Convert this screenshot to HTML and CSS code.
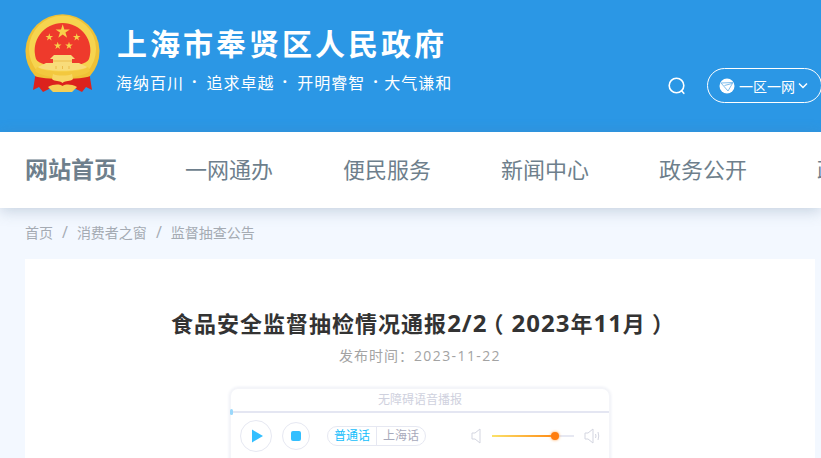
FILE: index.html
```html
<!DOCTYPE html>
<html lang="zh-CN">
<head>
    <meta charset="UTF-8">
    <meta name="viewport" content="width=device-width, initial-scale=1.0">
    <title>食品安全监督抽检情况通报</title>
    <link rel="stylesheet" href="styles.css">
</head>
<body>
    <header class="top">
        <svg class="emblem" viewBox="0 0 76 80">
            <defs>
                <polygon id="star" points="0,-10 2.240,-3.090 9.510,-3.090 3.630,1.180 5.880,8.090 0,3.820 -5.880,8.090 -3.630,1.180 -9.510,-3.090 -2.240,-3.090" fill="#f8d04a"/>
            </defs>
            <path d="M11 57 L8 76 L14 73 L18 78 L26 74 L32 77 H43 L49 74 L57 78 L61 73 L67 76 L64 57 Z" fill="#dc221d"/>
            <path d="M10 62 A37 37 0 1 1 65 62 C58 66 17 66 10 62 Z" fill="#efc136"/>
            <path d="M13 58 A33.500 33.500 0 1 1 62 58 C55 62 20 62 13 58 Z" fill="#f6d44f"/>
            <path d="M37.500 9 A27.500 27.500 0 0 1 64 45 C60 55 15 55 11 45 A27.500 27.500 0 0 1 37.500 9 Z" fill="#ee3a2c"/>
            <use href="#star" transform="translate(37.700 17.700) scale(.75)"/>
            <use href="#star" transform="translate(24.300 23.300) scale(.4)"/>
            <use href="#star" transform="translate(51.700 23.300) scale(.4)"/>
            <use href="#star" transform="translate(32.700 31.700) scale(.4)"/>
            <use href="#star" transform="translate(44 31.700) scale(.4)"/>
            <path d="M25 45 L29 41 H46 L50 45 H47 V49 H54 L62 53 C54 58 21 58 13 53 L21 49 H28 V45 Z" fill="#f8dc7a"/>
            <path d="M28 47 H47 M31 52 V55 M37.500 52 V55 M44 52 V55" stroke="#e8b440" stroke-width=".8"/>
            <path d="M12 53 C20 59 55 59 63 53 L65 57 C54 66 21 66 10 57 Z" fill="#f3c83e"/>
            <path d="M28 60 C32 62 43 62 47 60 L48 65 C45 68 41 66 37.500 69 C34 66 30 68 27 65 Z" fill="#f8d764"/>
            <path d="M23 73 C29 70 34 70 37.500 72 C41 70 46 70 52 73 L47 78 H28 Z" fill="#f6cf55"/>
        </svg>
        <div class="brand">
            <h1>上海市奉贤区人民政府</h1>
            <p>海纳百川<i>·</i>追求卓越<i>·</i>开明睿智<i class="tight">·</i>大气谦和</p>
        </div>
        <div class="tools">
            <svg class="search" viewBox="0 0 20 20">
                <circle cx="9.500" cy="9.500" r="7.300" fill="none" stroke="#fff" stroke-width="1.600"/>
                <path d="M14.800 15 L16.800 17.300" stroke="#fff" stroke-width="1.600" stroke-linecap="round"/>
            </svg>
            <div class="pill">
                <svg class="ball" viewBox="0 0 16 16">
                    <circle cx="8" cy="8" r="7.500" fill="#fff"/>
                    <path d="M2 5 L14 4.500 L9 13 Z M5.500 7.500 L13 5.500" fill="none" stroke="#7fbdec" stroke-width="1"/>
                </svg>
                <span>一区一网</span>
                <svg class="arrow" viewBox="0 0 10 8">
                    <path d="M1 1.500 L5 5.500 L9 1.500" fill="none" stroke="#fff" stroke-width="1.500"/>
                </svg>
            </div>
        </div>
    </header>

    <nav class="nav">
        <a class="home" href="#">网站首页</a>
        <a href="#">一网通办</a>
        <a href="#">便民服务</a>
        <a href="#">新闻中心</a>
        <a href="#">政务公开</a>
        <a href="#">政民互动</a>
    </nav>

    <main class="main">
        <div class="crumbs">
            <a href="#">首页</a><b>/</b><a href="#">消费者之窗</a><b>/</b><a href="#">监督抽查公告</a>
        </div>
        <article class="card">
            <h2>食品安全监督抽检情况通报<span class="num">2/2</span><span class="open">（</span><span class="num">2023</span>年<span class="num">11</span>月<span class="close">）</span></h2>
            <p class="date">发布时间：<span class="stamp">2023-11-22</span></p>
            <div class="player">
                <div class="player-title">无障碍语音播报</div>
                <div class="progress"><span class="knob"></span></div>
                <div class="controls">
                    <button class="round play"><svg viewBox="0 0 12 14"><path d="M0 0 L12 7 L0 14 Z" fill="#33bfff"/></svg></button>
                    <button class="round stop"><span></span></button>
                    <div class="tabs">
                        <span class="on">普通话</span>
                        <span>上海话</span>
                    </div>
                    <svg class="vol low" viewBox="0 0 10 16">
                        <path d="M1 5 H4 L9 1 V15 L4 11 H1 Z" fill="none" stroke="#d3d5e0"/>
                    </svg>
                    <div class="slider"><div class="fill"></div><div class="thumb"></div></div>
                    <svg class="vol high" viewBox="0 0 16 16">
                        <path d="M1 5 H4 L9 1 V15 L4 11 H1 Z" fill="none" stroke="#d3d5e0"/>
                        <path d="M11.500 6 Q12.500 8 11.500 10 M14 4 Q15.500 8 14 12" fill="none" stroke="#d3d5e0"/>
                    </svg>
                </div>
            </div>
        </article>
    </main>
</body>
</html>
```

FILE: styles.css
```css
* {
    box-sizing: border-box;
}

html, body {
    height: 100%;
    overflow: hidden;
}

body {
    margin: 0;
    font-family: "Open Sans", "Noto Sans CJK SC", sans-serif;
    background-color: #f3f8ff;
}

a {
    text-decoration: none;
    color: inherit;
}

.top {
    height: 132px;
    padding: 14px 0 0 25px;
    background-color: #2b97e5;
    color: white;
    display: flex;
}

.emblem {
    width: 76px;
    height: 80px;
    flex-shrink: 0;
}

.brand {
    margin-left: 15px;
}

.brand h1 {
    margin: 8px 0 0 1px;
    font-size: 30px;
    line-height: 44px;
    letter-spacing: 3px;
    font-weight: 700;
    white-space: nowrap;
}

.brand p {
    margin: 3px 0 0;
    font-size: 16px;
    line-height: 24px;
    letter-spacing: 1px;
    white-space: nowrap;
}

.brand i {
    font-style: normal;
    font-weight: 700;
    margin: 0 9px 0 8px;
    vertical-align: 2px;
}

.brand i.tight {
    margin: 0 5.500px 0 8px;
}

.tools {
    margin-left: auto;
    margin-right: -1px;
    padding-top: 54px;
    display: flex;
    align-items: flex-start;
    flex-shrink: 0;
}

.search {
    width: 20px;
    height: 20px;
    margin: 8px 20px 0 0;
}

.pill {
    width: 115px;
    height: 35px;
    border: 1px solid #fff;
    border-radius: 18px;
    padding-left: 11px;
    display: flex;
    align-items: center;
    font-size: 14px;
}

.ball {
    width: 16px;
    height: 16px;
    margin-right: 4px;
}

.arrow {
    width: 10px;
    height: 8px;
    margin-left: 3px;
}

.nav {
    height: 76px;
    padding: 0 0 4px 25px;
    background-color: #fff;
    display: flex;
    align-items: center;
    gap: 70px;
    font-size: 22px;
    color: #6e7f8c;
    white-space: nowrap;
    box-shadow: 0 3px 14px rgba(90, 120, 150, 0.3);
    position: relative;
}

.nav .home {
    font-size: 23px;
    font-weight: 700;
    margin-right: -2px;
}

.main {
    padding: 0 6px 0 25px;
}

.crumbs {
    height: 51px;
    padding-bottom: 3px;
    display: flex;
    align-items: center;
    font-size: 14px;
    color: #a5abb3;
}

.crumbs b {
    font-weight: 400;
    margin: 0 9px;
    font-size: 16px;
}

.card {
    height: 400px;
    padding-top: 46px;
    background-color: #fff;
}

.card h2 {
    margin: 0;
    text-align: center;
    font-size: 22px;
    line-height: 36px;
    letter-spacing: 1px;
    color: #333;
    white-space: nowrap;
}

.num {
    font-size: 24px;
}

/* half-width brackets, spaced out by hand */
.open {
    font-feature-settings: "halt";
    margin: 0 7px 0 5px;
}

.close {
    font-feature-settings: "halt";
    margin: 0 5px 0 6px;
}

.date {
    margin: 3px 0 0;
    text-align: center;
    font-size: 14px;
    line-height: 24px;
    letter-spacing: 1px;
    color: #a3a3a3;
}

.stamp {
    letter-spacing: 1.400px;
}

.player {
    width: 382px;
    height: 90px;
    margin: 19px auto 0;
    border: 2px solid #f4f5f9;
    border-radius: 9px;
    box-shadow: 0 0 3px #eceef5;
}

.player-title {
    height: 22px;
    text-align: center;
    font-size: 12px;
    line-height: 22px;
    color: #cfd1de;
}

.progress {
    height: 2px;
    background-color: #e4e6f2;
    position: relative;
}

.knob {
    position: absolute;
    left: -1px;
    top: -2px;
    width: 3px;
    height: 6px;
    border-radius: 2px;
    background-color: #9ad8fb;
}

.controls {
    height: 46px;
    padding-left: 9px;
    display: flex;
    align-items: center;
}

.round {
    padding: 0;
    background: none;
    border: 1px solid #e6e8f2;
    border-radius: 50%;
    display: flex;
    align-items: center;
    justify-content: center;
}

.play {
    width: 32px;
    height: 32px;
}

.play svg {
    width: 11px;
    height: 14px;
    margin-left: 2px;
}

.stop {
    width: 28px;
    height: 28px;
    margin-left: 10px;
}

.stop span {
    width: 10px;
    height: 10px;
    border-radius: 2px;
    background-color: #33bfff;
}

.tabs {
    width: 99px;
    height: 20px;
    margin-left: 17px;
    border: 1px solid #e6e8f2;
    border-radius: 10px;
    display: flex;
    font-size: 12px;
    line-height: 17px;
    color: #a7a9bb;
}

.tabs span {
    flex: 1;
    text-align: center;
}

.tabs .on {
    color: #14bdfb;
    border-right: 1px solid #e6e8f2;
}

.vol {
    height: 16px;
    flex-shrink: 0;
}

.low {
    width: 10px;
    margin-left: 45px;
}

.high {
    width: 16px;
    margin-left: 10px;
}

.slider {
    width: 82px;
    height: 2px;
    margin-left: 11px;
    background-color: #e6e8f2;
    position: relative;
}

.fill {
    width: 63px;
    height: 2px;
    background: linear-gradient(90deg, #fbe26a, #ff8a14);
}

.thumb {
    position: absolute;
    left: 59px;
    top: -3px;
    width: 8px;
    height: 8px;
    border-radius: 50%;
    background-color: #ff7d0e;
    box-shadow: 0 0 3px #ff9c40;
}
```
